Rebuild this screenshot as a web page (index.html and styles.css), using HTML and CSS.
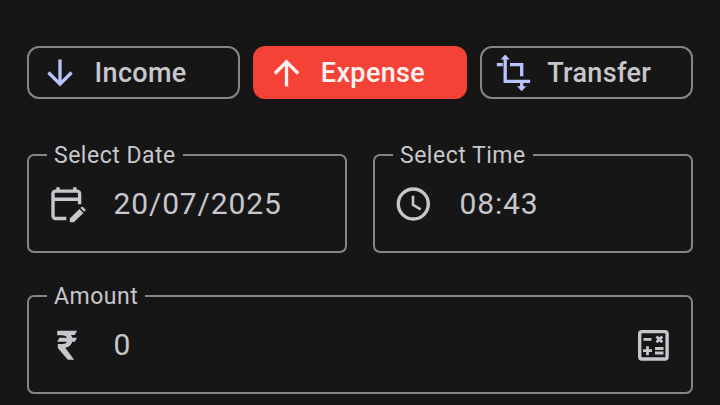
FILE: index.html
```html
<!DOCTYPE html>
<html lang="en">
<head>
<meta charset="utf-8">
<title>Add transaction</title>
<link rel="stylesheet" href="styles.css">
</head>
<body>
<main class="form">
  <nav class="types">
    <button class="type" type="button">
      <svg class="type-icon" viewBox="0 0 36 40"><path d="M15 6.500V32M3.400 19.500 15 31.200 26.600 19.500"/></svg>
      <span>Income</span>
    </button>
    <button class="type type-active" type="button">
      <svg class="type-icon" viewBox="0 0 36 40"><path d="M15.500 33.500V8M3.900 20.500 15.500 8.800 27.100 20.500"/></svg>
      <span>Expense</span>
    </button>
    <button class="type" type="button">
      <svg class="type-icon" viewBox="0 0 36 40"><path d="M7.200 5V28.300H32.200M-1.200 11.700h6M12 11.700H23.700V23.300M23.700 28.300V34"/><path class="solid" d="M2.600 6.600 7.200 1.500l4.600 5.100zM19.100 33.200h9.200l-4.600 5.100z"/></svg>
      <span>Transfer</span>
    </button>
  </nav>
  <section class="fields">
    <fieldset class="field">
      <legend>Select Date</legend>
      <div class="row">
        <svg class="icon" viewBox="0 0 40 40"><path d="M19.300 34.500H8.500a2.500 2.500 0 0 1-2.500-2.500V9.600a2.500 2.500 0 0 1 2.500-2.500H30.100a2.500 2.500 0 0 1 2.500 2.500V20.300M6 15.300H32.600M11 8V3.200M27.800 8V3.200"/><path class="solid" d="M22.800 34.500 32.400 24.900l4 4-9.600 9.400H22.800zM33.400 24l1-1q.8-.7 1.600 0l2.200 2.200q.7.800 0 1.600l-1 1z"/></svg>
        <span class="value">20/07/2025</span>
      </div>
    </fieldset>
    <fieldset class="field">
      <legend>Select Time</legend>
      <div class="row">
        <svg class="icon" viewBox="0 0 40 40"><circle cx="20.300" cy="20" r="15"/><path class="hand" d="M20 11.800V20.800L27.700 25.400"/></svg>
        <span class="value">08:43</span>
      </div>
    </fieldset>
    <fieldset class="field field-wide">
      <legend>Amount</legend>
      <div class="row">
        <svg class="icon" viewBox="0 0 40 40"><path class="solid" d="M10.200 5.800H30l-2.200 4.100H24q1 1.400 1.300 2.800H30l-2.200 4.100H25.200q-1.300 4.900-7 5.900L27.200 34.700H20.800L10.800 23V19H15.500q3.600 0 4.700-2.200H10.200l2.200-4.100H20.200q-1.100-2.500-4.700-2.500H10.200z"/></svg>
        <span class="value">0</span>
        <svg class="icon calc" viewBox="0 0 40 40"><rect x="6.700" y="6.600" width="27.400" height="27.400" rx="2.200"/><path class="marks" d="M10.500 14.400h8M23.500 11.500l5.800 5.800M29.300 11.500l-5.800 5.800M10 25.700h9M14.500 21.200v9M22 23.500h8.500M22 28h8.500"/></svg>
      </div>
    </fieldset>
  </section>
</main>
</body>
</html>
```
FILE: styles.css
```css
* {
  box-sizing: border-box;
}

body {
  margin: 0;
  height: 405px;
  overflow: hidden;
  background: #161616;
  color: #c8c6cc;
  font-family: Roboto, sans-serif;
}

.form {
  padding: 46px 27px 0;
}

.types {
  display: grid;
  grid-template-columns: repeat(3, 1fr);
  gap: 13px;
}

.type {
  display: flex;
  align-items: center;
  gap: 13.5px;
  height: 53px;
  padding: 0 0 0 16px;
  border: 2px solid #85848c;
  border-radius: 12px;
  background: none;
  color: #c8c6cc;
  font: 500 27px/1 Roboto, sans-serif;
  letter-spacing: 0.35px;
}

.type span {
  padding-top: 2px;
}

.type-active {
  border-color: #f44336;
  background: #f44336;
  color: #fff4f2;
}

.type-icon {
  width: 36px;
  height: 40px;
  overflow: visible;
  fill: none;
  stroke: #b9c3ff;
  stroke-width: 3.3;
}

.type-active .type-icon {
  stroke: #fff4f2;
}

.type .solid {
  fill: #b9c3ff;
  stroke: none;
}

.fields {
  display: grid;
  grid-template-columns: 1fr 1fr;
  gap: 30px 26px;
  margin-top: 43px;
}

.field {
  height: 111px;
  min-width: 0;
  margin: 0;
  padding: 0 18px;
  border: 2px solid #85848c;
  border-radius: 7px;
}

.field-wide {
  grid-column: 1 / -1;
}

legend {
  height: 26px;
  padding: 0 7px;
  font-size: 23px;
  line-height: 28px;
  letter-spacing: 0.5px;
}

.field-wide legend {
  line-height: 27px;
}

.row {
  display: flex;
  align-items: center;
  height: 71px;
}

.icon {
  width: 40px;
  height: 40px;
  fill: none;
  stroke: #c8c6cc;
  stroke-width: 3.4;
}

.icon .solid {
  fill: #c8c6cc;
  stroke: none;
}

.icon .hand {
  stroke-width: 2.6;
}

.icon .marks {
  stroke-width: 2.8;
}

.value {
  margin-left: 26.5px;
  font-size: 30px;
  line-height: 36px;
  letter-spacing: 0.85px;
}

.calc {
  margin-left: auto;
}
```
